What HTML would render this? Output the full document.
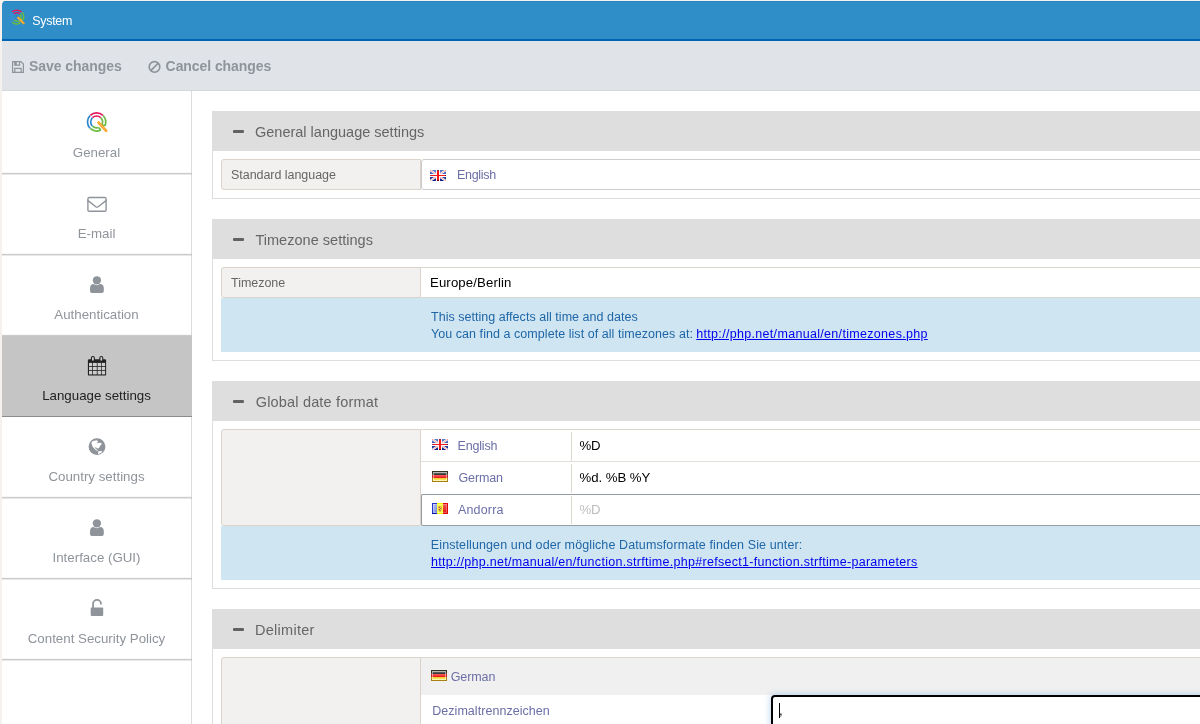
<!DOCTYPE html>
<html>
<head>
<meta charset="utf-8">
<title>System</title>
<style>
*{box-sizing:border-box;margin:0;padding:0}
html,body{width:1200px;height:724px;overflow:hidden;background:#f5f1ef;font-family:"Liberation Sans",sans-serif;}
.abs{position:absolute}
#win{position:absolute;left:2px;top:1px;width:1198px;height:723px;background:#fff;border-top-left-radius:4px;overflow:hidden}
#hdr{position:absolute;left:0;top:0;width:1198px;height:40px;background:#2f8dc8;border-bottom:2px solid #0063b4;box-shadow:0 1px 0 #2585c2 inset}
#tb{position:absolute;left:0;top:40px;width:1198px;height:50px;background:#e0e3e8;border-bottom:1px solid #d6d6da}
#side{position:absolute;left:0;top:90px;width:190px;height:633px;background:#fff;border-right:1px solid #dcdcdc}
.it{position:absolute;left:0;width:190px;height:81px;border-bottom:1px solid #cbcbcb;box-shadow:0 1px 0 rgba(0,0,0,.09),0 -1px 0 rgba(0,0,0,.03) inset}
.it .l{position:absolute;left:0;width:189px;top:52px;text-align:center;will-change:transform;font-size:13.3px;line-height:15px;color:#8f949b;white-space:nowrap}
.it.on{background:#c5c5c5;border-bottom-color:#8c8c8c;box-shadow:none}
.it.on .l{color:#222}
.it svg{position:absolute}
.sh{position:absolute;left:210px;width:990px;height:40px;background:#dedede}
.sh .m{position:absolute;left:20.5px;top:18.6px;width:11px;height:3.5px;border-radius:1px;background:#626262}
.fs{position:absolute;left:210px;width:990px;border:1px solid #ddd;border-top:none;border-right:none}
.lb{position:absolute;left:219px;width:200px;background:#f2f1ef;border:1px solid #d9d3ca;border-radius:3px 0 0 3px}
.info{position:absolute;left:219px;width:981px;background:#cfe5f1}
#txt{position:absolute;left:0;top:0;width:1198px;height:723px;will-change:transform}
.tx{position:absolute;line-height:20px;white-space:nowrap}
.sel{position:absolute;left:419px;width:790px;height:31px;background:#fff;border:1px solid #cbcbcb;border-radius:3px}
.row{position:absolute;left:419px;width:790px;height:32px;background:#fff;border-top:1px solid #e2ded8}
.row .v{position:absolute;left:150px;top:2px;width:1px;height:29px;background:#ddd8cf}
.flag{position:absolute;width:16px;height:11px}
</style>
</head>
<body>
<svg width="0" height="0" style="position:absolute">
<defs>
<linearGradient id="gbb" x1="0" y1="0" x2="0" y2="1"><stop offset="0" stop-color="#5f7fd2"/><stop offset="1" stop-color="#0d1a86"/></linearGradient>
<linearGradient id="dk" x1="0" y1="0" x2="0" y2="1"><stop offset="0" stop-color="#8c8c8a"/><stop offset="1" stop-color="#262626"/></linearGradient>
<linearGradient id="dr" x1="0" y1="0" x2="0" y2="1"><stop offset="0" stop-color="#ff6060"/><stop offset="1" stop-color="#e31515"/></linearGradient>
<linearGradient id="dy" x1="0" y1="0" x2="0" y2="1"><stop offset="0" stop-color="#f0cb18"/><stop offset="1" stop-color="#fff890"/></linearGradient>
<linearGradient id="ab" x1="0" y1="0" x2="1" y2="1"><stop offset="0" stop-color="#c0c8f2"/><stop offset="1" stop-color="#6f80dc"/></linearGradient>
<linearGradient id="ar" x1="0" y1="0" x2="0" y2="1"><stop offset="0" stop-color="#f45a5a"/><stop offset="1" stop-color="#e41414"/></linearGradient>
<clipPath id="fc"><rect width="16" height="11"/></clipPath>
<g id="gb" clip-path="url(#fc)">
  <rect width="16" height="11" fill="url(#gbb)"/>
  <path d="M0 0 L16 11 M16 0 L0 11" stroke="#fff" stroke-width="2"/>
  <path d="M0 0 L16 11 M16 0 L0 11" stroke="#f04a3a" stroke-width="0.7" stroke-dasharray="1 .5"/>
  <path d="M8 0 V11" stroke="#fff" stroke-width="4"/>
  <path d="M0 5.5 H16" stroke="#fff" stroke-width="3"/>
  <path d="M8 0 V11" stroke="#f41a1a" stroke-width="2"/>
  <path d="M0 5.5 H16" stroke="#f41a1a" stroke-width="1"/>
  <rect x="7" y="0" width="2" height="1" fill="#8a2040"/><rect x="7" y="10" width="2" height="1" fill="#780014"/>
  <rect x="0" y="5" width="1" height="1" fill="#a03050"/><rect x="15" y="5" width="1" height="1" fill="#780014"/>
</g>
<g id="de">
  <rect width="16" height="3.7" fill="#33331f"/>
  <rect y="3.7" width="16" height="3.6" fill="#b82525"/>
  <rect y="7.3" width="16" height="3.7" fill="#a8800f"/>
  <rect x="1" y="1" width="14" height="3" fill="url(#dk)"/>
  <rect x="1" y="4" width="14" height="3" fill="url(#dr)"/>
  <rect x="1" y="7" width="14" height="3" fill="url(#dy)"/>
  <rect x="1.5" y="1.5" width="13" height="8" fill="none" stroke="#fff" stroke-opacity=".45"/>
</g>
<g id="ad">
  <rect width="5" height="11" fill="#2435cc"/>
  <rect x="5" width="6" height="11" fill="#f8f000"/>
  <rect x="11" width="5" height="11" fill="#de0505"/>
  <rect x="1" y="1" width="4" height="9" fill="url(#ab)"/>
  <rect x="5" y="1" width="6" height="9" fill="#ffff3c"/>
  <rect x="11" y="1" width="4" height="9" fill="url(#ar)"/>
  <rect x="0" y="10" width="5" height="1" fill="#0a12b0"/>
  <path d="M6.4 3.2H9.6V7Q9.6 8.3 8 8.8Q6.4 8.3 6.4 7Z" fill="#b89258"/>
  <rect x="7" y="4" width="1" height="1" fill="#e04040"/><rect x="8" y="5" width="1" height="1" fill="#e04040"/><rect x="7" y="6" width="1" height="1" fill="#e04040"/>
  <rect x="8" y="4" width="1" height="1" fill="#f0e040"/><rect x="7" y="5" width="1" height="1" fill="#f0e040"/><rect x="8" y="6" width="1" height="1" fill="#f0e040"/>
  <rect x="1.5" y="1.5" width="13" height="8" fill="none" stroke="#fff" stroke-opacity=".25"/>
</g>
</defs>
</svg>
<div id="win">
  <div id="hdr"><svg class="abs" style="left:5px;top:5px" width="24" height="24" viewBox="7 6 24 24"><g fill="none" stroke-width="1.4"><path d="M12.01 12.04A6.9 6.9 0 0 1 21.59 12.04 M13.88 13.98A4.2 4.2 0 0 1 19.72 13.98" stroke="#e6175f"/><path d="M11.84 21.79A6.9 6.9 0 0 1 11.84 12.21 M13.78 19.92A4.2 4.2 0 0 1 13.78 14.08" stroke="#3a8fd6"/><path d="M21.76 12.21A6.9 6.9 0 0 1 23.20 19.58 L20.36 19.23 M19.82 14.08A4.2 4.2 0 0 1 20.36 19.23" stroke="#6dbb45"/><path d="M20.04 23.09A6.9 6.9 0 0 1 12.01 21.96 M18.10 20.99A4.2 4.2 0 0 1 13.88 20.02 M20.04 23.09L18.10 20.99" stroke="#6dbb45"/><path d="M18.2 17.8L23.6 23.2" stroke="#f6a21f" stroke-width="2.31" stroke-linecap="round"/><path d="M18.2 17.8L23.6 23.2" stroke="#fff" stroke-width="0.49" stroke-dasharray="0.8 0.6" stroke-opacity=".85"/></g></svg></div>
  <div id="tb"><svg class="abs" style="left:8px;top:18px" width="16" height="16" viewBox="10 59 16 16"><g fill="none" stroke="#8f949b" stroke-width="1.2" stroke-linejoin="round"><path d="M12.6 61.6H21L23.4 64V72.4H12.6Z"/><path d="M14.8 72.4V68.3H21.2V72.4"/><path d="M14.8 61.6V65.2H19.6V61.6"/></g><rect x="14.8" y="61.6" width="2" height="3.6" fill="#8f949b"/></svg><svg class="abs" style="left:144px;top:18px" width="16" height="16" viewBox="146 59 16 16"><g fill="none" stroke="#8f949b" stroke-width="1.65"><circle cx="154.5" cy="66.9" r="5.3"/><path d="M150.8 70.6L158.2 63.2"/></g></svg></div>
  <div id="side">
    <div class="it" style="top:2px"><svg style="left:75px;top:10px" width="40" height="40" viewBox="77 103 40 40"><g fill="none" stroke-width="1.7"><path d="M90.28 115.35A9.1 9.1 0 0 1 102.92 115.35 M92.50 117.66A5.9 5.9 0 0 1 100.70 117.66" stroke="#e6175f"/><path d="M90.05 128.22A9.1 9.1 0 0 1 90.05 115.58 M92.36 126.00A5.9 5.9 0 0 1 92.36 117.80" stroke="#2b86cf"/><path d="M103.15 115.58A9.1 9.1 0 0 1 105.04 125.31 L101.60 125.03 M100.84 117.80A5.9 5.9 0 0 1 101.60 125.03" stroke="#6dbb45"/><path d="M100.87 129.93A9.1 9.1 0 0 1 90.28 128.45 M98.42 127.51A5.9 5.9 0 0 1 92.50 126.14 M100.87 129.93L98.42 127.51" stroke="#6dbb45"/><path d="M98.6 122.6L106.0 130.6" stroke="#f6a21f" stroke-width="2.80" stroke-linecap="round"/><path d="M98.6 122.6L106.0 130.6" stroke="#fff" stroke-width="0.59" stroke-dasharray="0.8 0.6" stroke-opacity=".85"/></g></svg><div class="l">General</div></div>
    <div class="it" style="top:83px"><svg style="left:75px;top:10px" width="40" height="40" viewBox="77 184 40 40"><g fill="none" stroke="#8f949b" stroke-width="1.4" stroke-linejoin="round" stroke-linecap="round"><rect x="87.9" y="197.5" width="18.2" height="13.8" rx="1.4"/><path d="M88 200.6 L95.8 206.7 Q97 207.6 98.2 206.7 L106 200.6"/></g></svg><div class="l">E-mail</div></div>
    <div class="it" style="top:164px"><svg style="left:75px;top:10px" width="40" height="40" viewBox="77 265 40 40"><path fill="#8f949b" d="M90 291.0V288.6Q90 284.0 93.6 284.0H100.2Q103.8 284.0 103.8 288.6V291.0Q103.8 292.9 101.8 292.9H92Q90 292.9 90 291.0Z"/><circle cx="96.9" cy="280.3" r="4.9" fill="#fff"/><circle cx="96.9" cy="280.3" r="4.15" fill="#8f949b"/></svg><div class="l">Authentication</div></div>
    <div class="it on" style="top:245px"><svg style="left:75px;top:10px" width="40" height="40" viewBox="77 346 40 40"><g><rect x="87.9" y="359.2" width="18.2" height="16.4" rx="1.2" fill="#222"/><rect x="89.0" y="362.9" width="3.15" height="3.20" fill="#cdcdcd"/><rect x="89.0" y="366.9" width="3.15" height="3.20" fill="#cdcdcd"/><rect x="89.0" y="370.9" width="3.15" height="3.50" fill="#cdcdcd"/><rect x="92.9" y="362.9" width="3.90" height="3.20" fill="#cdcdcd"/><rect x="92.9" y="366.9" width="3.90" height="3.20" fill="#cdcdcd"/><rect x="92.9" y="370.9" width="3.90" height="3.50" fill="#cdcdcd"/><rect x="97.6" y="362.9" width="3.50" height="3.20" fill="#cdcdcd"/><rect x="97.6" y="366.9" width="3.50" height="3.20" fill="#cdcdcd"/><rect x="97.6" y="370.9" width="3.50" height="3.50" fill="#cdcdcd"/><rect x="101.8" y="362.9" width="3.30" height="3.20" fill="#cdcdcd"/><rect x="101.8" y="366.9" width="3.30" height="3.20" fill="#cdcdcd"/><rect x="101.8" y="370.9" width="3.30" height="3.50" fill="#cdcdcd"/><rect x="90.9" y="356" width="4.0" height="5.6" rx="1.9" fill="#222"/><rect x="92.0" y="357.1" width="1.8" height="3.6" rx="0.9" fill="#d0d0d0"/><rect x="99.3" y="356" width="4.0" height="5.6" rx="1.9" fill="#222"/><rect x="100.39999999999999" y="357.1" width="1.8" height="3.6" rx="0.9" fill="#d0d0d0"/></g></svg><div class="l">Language settings</div></div>
    <div class="it" style="top:326px"><svg style="left:75px;top:10px" width="40" height="40" viewBox="77 427 40 40"><circle cx="97" cy="446.6" r="8.4" fill="#8f949b"/><path fill="#fff" d="M91.41 442.42L92.90 440.93L96.87 440.18L98.12 441.18L96.87 442.42L98.37 442.92L100.85 442.67L101.84 443.91L100.35 445.40L99.36 447.39L98.37 448.38L96.63 448.14L96.13 447.14L94.89 447.39L95.88 448.88L97.87 450.37L97.37 451.12L95.38 449.63L92.90 446.89L91.90 444.90Z M98.37 451.37L102.34 451.12L101.10 453.11L97.87 454.10Z"/></svg><div class="l">Country settings</div></div>
    <div class="it" style="top:407px"><svg style="left:75px;top:10px" width="40" height="40" viewBox="77 508 40 40"><path fill="#8f949b" d="M90 534.0V531.6Q90 527.0 93.6 527.0H100.2Q103.8 527.0 103.8 531.6V534.0Q103.8 535.9 101.8 535.9H92Q90 535.9 90 534.0Z"/><circle cx="96.9" cy="523.3" r="4.9" fill="#fff"/><circle cx="96.9" cy="523.3" r="4.15" fill="#8f949b"/></svg><div class="l">Interface (GUI)</div></div>
    <div class="it" style="top:488px"><svg style="left:75px;top:10px" width="40" height="40" viewBox="77 589 40 40"><rect x="90.7" y="607.6" width="12.5" height="8.3" rx="0.9" fill="#8f949b"/><path d="M93.05 608.2V603.85A3.95 3.95 0 0 1 100.95 603.85V604.5" fill="none" stroke="#8f949b" stroke-width="1.8"/></svg><div class="l">Content Security Policy</div></div>
  </div>

  <div class="sh" style="top:110px"><div class="m"></div></div>
  <div class="fs" style="top:150px;height:48px"></div>
  <div class="lb" style="top:158px;height:31px"></div>
  <div class="sel" style="top:158px"></div>
  <svg class="flag" style="left:428px;top:169px" viewBox="0 0 16 11"><use href="#gb"/></svg>

  <div class="sh" style="top:218px"><div class="m"></div></div>
  <div class="fs" style="top:258px;height:102px"></div>
  <div class="lb" style="top:266px;height:31px"></div>
  <div class="info" style="top:297px;height:54px"></div>
  <div class="row" style="top:266px;height:31px;border-top:1px solid #ddd8cf;border-bottom:1px solid #ddd8cf"></div>

  <div class="sh" style="top:380px"><div class="m"></div></div>
  <div class="fs" style="top:420px;height:168px"></div>
  <div class="lb" style="top:428px;height:97px"></div>
  <div class="info" style="top:525px;height:54px"></div>
  <div class="row" style="top:428px;border-top:1px solid #ddd8cf"><div class="v"></div></div>
  <div class="row" style="top:460px"><div class="v"></div></div>
  <div class="row" style="top:493px;height:32px;border:1px solid #969ca6;border-right:none;border-radius:2px 0 0 2px"><div class="v" style="left:149px;top:1px;height:28px"></div></div>
  <svg class="flag" style="left:430px;top:438px" viewBox="0 0 16 11"><use href="#gb"/></svg>
  <svg class="flag" style="left:430px;top:470px" viewBox="0 0 16 11"><use href="#de"/></svg>
  <svg class="flag" style="left:430px;top:502px" viewBox="0 0 16 11"><use href="#ad"/></svg>

  <div class="sh" style="top:608px"><div class="m"></div></div>
  <div class="fs" style="top:648px;height:80px"></div>
  <div class="lb" style="top:656px;height:80px"></div>
  <div class="abs" style="left:419px;top:656px;width:790px;height:38px;background:#f0f0f0;border-top:1px solid #ddd8cf"></div>
  <div class="abs" style="left:419px;top:694px;width:790px;height:40px;background:#fff"></div>
  <svg class="flag" style="left:429px;top:669px" viewBox="0 0 16 11"><use href="#de"/></svg>
  <div class="abs" style="left:769px;top:694px;width:440px;height:40px;background:#fff;border:2px solid #000;border-radius:4px;box-shadow:0 0 6px 1px rgba(120,170,225,.45)"></div>
  <div class="abs" style="left:777px;top:702px;width:1px;height:15px;background:#000"></div>
<div id="txt">
<span class="tx" style="left:30.30px;top:9.67px;font-size:12.5px;font-weight:normal;color:#fff;letter-spacing:-0.312px;">System</span>
<span class="tx" style="left:27.00px;top:55.15px;font-size:14px;font-weight:bold;color:#8f949b;letter-spacing:-0.055px;transform:scaleY(1.09);transform-origin:0 14.85px;">Save changes</span>
<span class="tx" style="left:163.60px;top:55.15px;font-size:14px;font-weight:bold;color:#8f949b;letter-spacing:-0.070px;transform:scaleY(1.09);transform-origin:0 14.85px;">Cancel changes</span>
<span class="tx" style="left:253.00px;top:120.88px;font-size:14.5px;font-weight:normal;color:#666;letter-spacing:-0.001px;">General language settings</span>
<span class="tx" style="left:253.40px;top:228.88px;font-size:14.5px;font-weight:normal;color:#666;letter-spacing:0.027px;">Timezone settings</span>
<span class="tx" style="left:253.70px;top:390.68px;font-size:14.5px;font-weight:normal;color:#666;letter-spacing:0.179px;">Global date format</span>
<span class="tx" style="left:253.00px;top:618.68px;font-size:14.5px;font-weight:normal;color:#666;letter-spacing:0.279px;">Delimiter</span>
<span class="tx" style="left:229.00px;top:163.67px;font-size:12.5px;font-weight:normal;color:#666;letter-spacing:-0.043px;">Standard language</span>
<span class="tx" style="left:229.00px;top:271.67px;font-size:12.5px;font-weight:normal;color:#666;letter-spacing:-0.024px;">Timezone</span>
<span class="tx" style="left:455.00px;top:163.67px;font-size:12.5px;font-weight:normal;color:#6b6fa6;letter-spacing:-0.291px;">English</span>
<span class="tx" style="left:455.50px;top:434.97px;font-size:12.5px;font-weight:normal;color:#6b6fa6;letter-spacing:-0.174px;">English</span>
<span class="tx" style="left:456.50px;top:466.67px;font-size:12.5px;font-weight:normal;color:#6b6fa6;letter-spacing:-0.140px;">German</span>
<span class="tx" style="left:456.00px;top:498.97px;font-size:12.5px;font-weight:normal;color:#6b6fa6;letter-spacing:0.164px;">Andorra</span>
<span class="tx" style="left:429.00px;top:306.17px;font-size:12.5px;font-weight:normal;color:#1f66a7;letter-spacing:0.035px;">This setting affects all time and dates</span>
<span class="tx" style="left:429.00px;top:323.17px;font-size:12.5px;font-weight:normal;color:#1f66a7;letter-spacing:0.053px;">You can find a complete list of all timezones at:</span>
<span class="tx" style="left:694.25px;top:323.17px;font-size:12.5px;font-weight:normal;color:#0000ee;letter-spacing:0.314px;text-decoration:underline;">http://php.net/manual/en/timezones.php</span>
<span class="tx" style="left:428.80px;top:534.42px;font-size:12.5px;font-weight:normal;color:#1f66a7;letter-spacing:0.107px;">Einstellungen und oder mögliche Datumsformate finden Sie unter:</span>
<span class="tx" style="left:429.00px;top:551.42px;font-size:12.5px;font-weight:normal;color:#0000ee;letter-spacing:0.292px;text-decoration:underline;">http://php.net/manual/en/function.strftime.php#refsect1-function.strftime-parameters</span>
<span class="tx" style="left:448.70px;top:665.67px;font-size:12.5px;font-weight:normal;color:#6b6fa6;letter-spacing:-0.100px;">German</span>
<span class="tx" style="left:430.20px;top:700.17px;font-size:12.5px;font-weight:normal;color:#6b6fa6;letter-spacing:0.046px;">Dezimaltrennzeichen</span>
<span class="tx" style="left:428.00px;top:272.43px;font-size:13.2px;font-weight:normal;color:#000;letter-spacing:0.119px;">Europe/Berlin</span>
<span class="tx" style="left:577.50px;top:435.43px;font-size:13.2px;font-weight:normal;color:#000;letter-spacing:-0.226px;">%D</span>
<span class="tx" style="left:577.50px;top:467.43px;font-size:13.2px;font-weight:normal;color:#000;letter-spacing:-0.037px;">%d. %B %Y</span>
<span class="tx" style="left:577.50px;top:499.43px;font-size:13.2px;font-weight:normal;color:#bdbdbd;letter-spacing:-0.226px;">%D</span>
<span class="tx" style="left:777.00px;top:700.43px;font-size:13.2px;font-weight:normal;color:#000;letter-spacing:0.000px;">,</span>
</div>
</div>
</body>
</html>
